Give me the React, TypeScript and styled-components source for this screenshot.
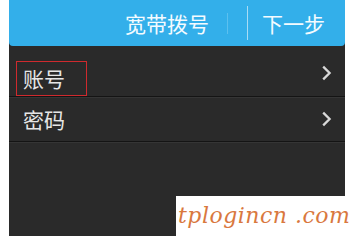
import React from 'react'
import styled, { createGlobalStyle } from 'styled-components'

const GlobalStyle = createGlobalStyle`
  html, body {
    margin: 0;
    padding: 0;
    background: #ffffff;
    overflow: hidden;
  }
  body {
    font-family: "Noto Sans CJK SC", "Noto Sans", sans-serif;
  }
`

const Page = styled.div`
  position: relative;
  width: 351px;
  height: 236px;
  background: #ffffff;
`

const Screen = styled.div`
  margin-left: 9px;
  width: 336px;
  height: 236px;
  background: #2a2a2a;
  display: flex;
  flex-direction: column;
`

const Header = styled.div`
  height: 46px;
  background: #33afea;
  border-radius: 0 0 4px 4px;
  display: flex;
  align-items: center;
  justify-content: flex-end;
  padding-right: 20px;
  color: #f4fbff;
  font-size: 21px;
`

const HeaderTitle = styled.div`
  line-height: 1;
  padding-right: 18px;
  border-right: 1px solid #5cc0ef;
`

const HeaderDivider = styled.div`
  width: 1px;
  height: 34px;
  margin-left: 19px;
  margin-right: 14px;
  background: #a9dcf5;
`

const HeaderButton = styled.div`
  line-height: 1;
`

const List = styled.div`
  display: flex;
  flex-direction: column;
`

const Row = styled.div<{ $height: number; $offset?: number }>`
  height: ${(p) => p.$height}px;
  box-sizing: border-box;
  padding: ${(p) => p.$offset ?? 0}px 13px 0 7px;
  display: flex;
  align-items: center;
  justify-content: space-between;
  border-bottom: 1px solid #141414;
  box-shadow: 0 1px 0 #353535;
  color: #e6e6e6;
  font-size: 21px;
`

const Label = styled.div<{ $marked?: boolean }>`
  line-height: 1;
  padding: 6px 21px 6px 6px;
  margin-top: ${(p) => (p.$marked ? 10 : 0)}px;
  border: 1px solid ${(p) => (p.$marked ? '#cf2a2e' : 'transparent')};
`

const Chevron = () => (
  <svg width="11" height="16" viewBox="0 0 11 16">
    <path d="M2.2 1.6 L8.6 8 L2.2 14.4" fill="none" stroke="#d8d8d8" strokeWidth="2.3" />
  </svg>
)

const Watermark = styled.div`
  position: absolute;
  left: 176px;
  top: 196px;
  right: 0;
  bottom: 0;
  background: #ffffff;
  color: #d9783e;
  font-family: "DejaVu Serif", "Liberation Serif", serif;
  font-style: italic;
  font-size: 22px;
  line-height: 40px;
  padding-left: 2px;
  white-space: nowrap;
  letter-spacing: 0.5px;
`

export default function App() {
  return (
    <Page>
      <GlobalStyle />
      <Screen>
        <Header>
          <HeaderTitle>宽带拨号</HeaderTitle>
          <HeaderDivider />
          <HeaderButton>下一步</HeaderButton>
        </Header>
        <List>
          <Row $height={51} $offset={4}>
            <Label $marked>账号</Label>
            <Chevron />
          </Row>
          <Row $height={45}>
            <Label>密码</Label>
            <Chevron />
          </Row>
        </List>
      </Screen>
      <Watermark>tplogincn .com</Watermark>
    </Page>
  )
}
